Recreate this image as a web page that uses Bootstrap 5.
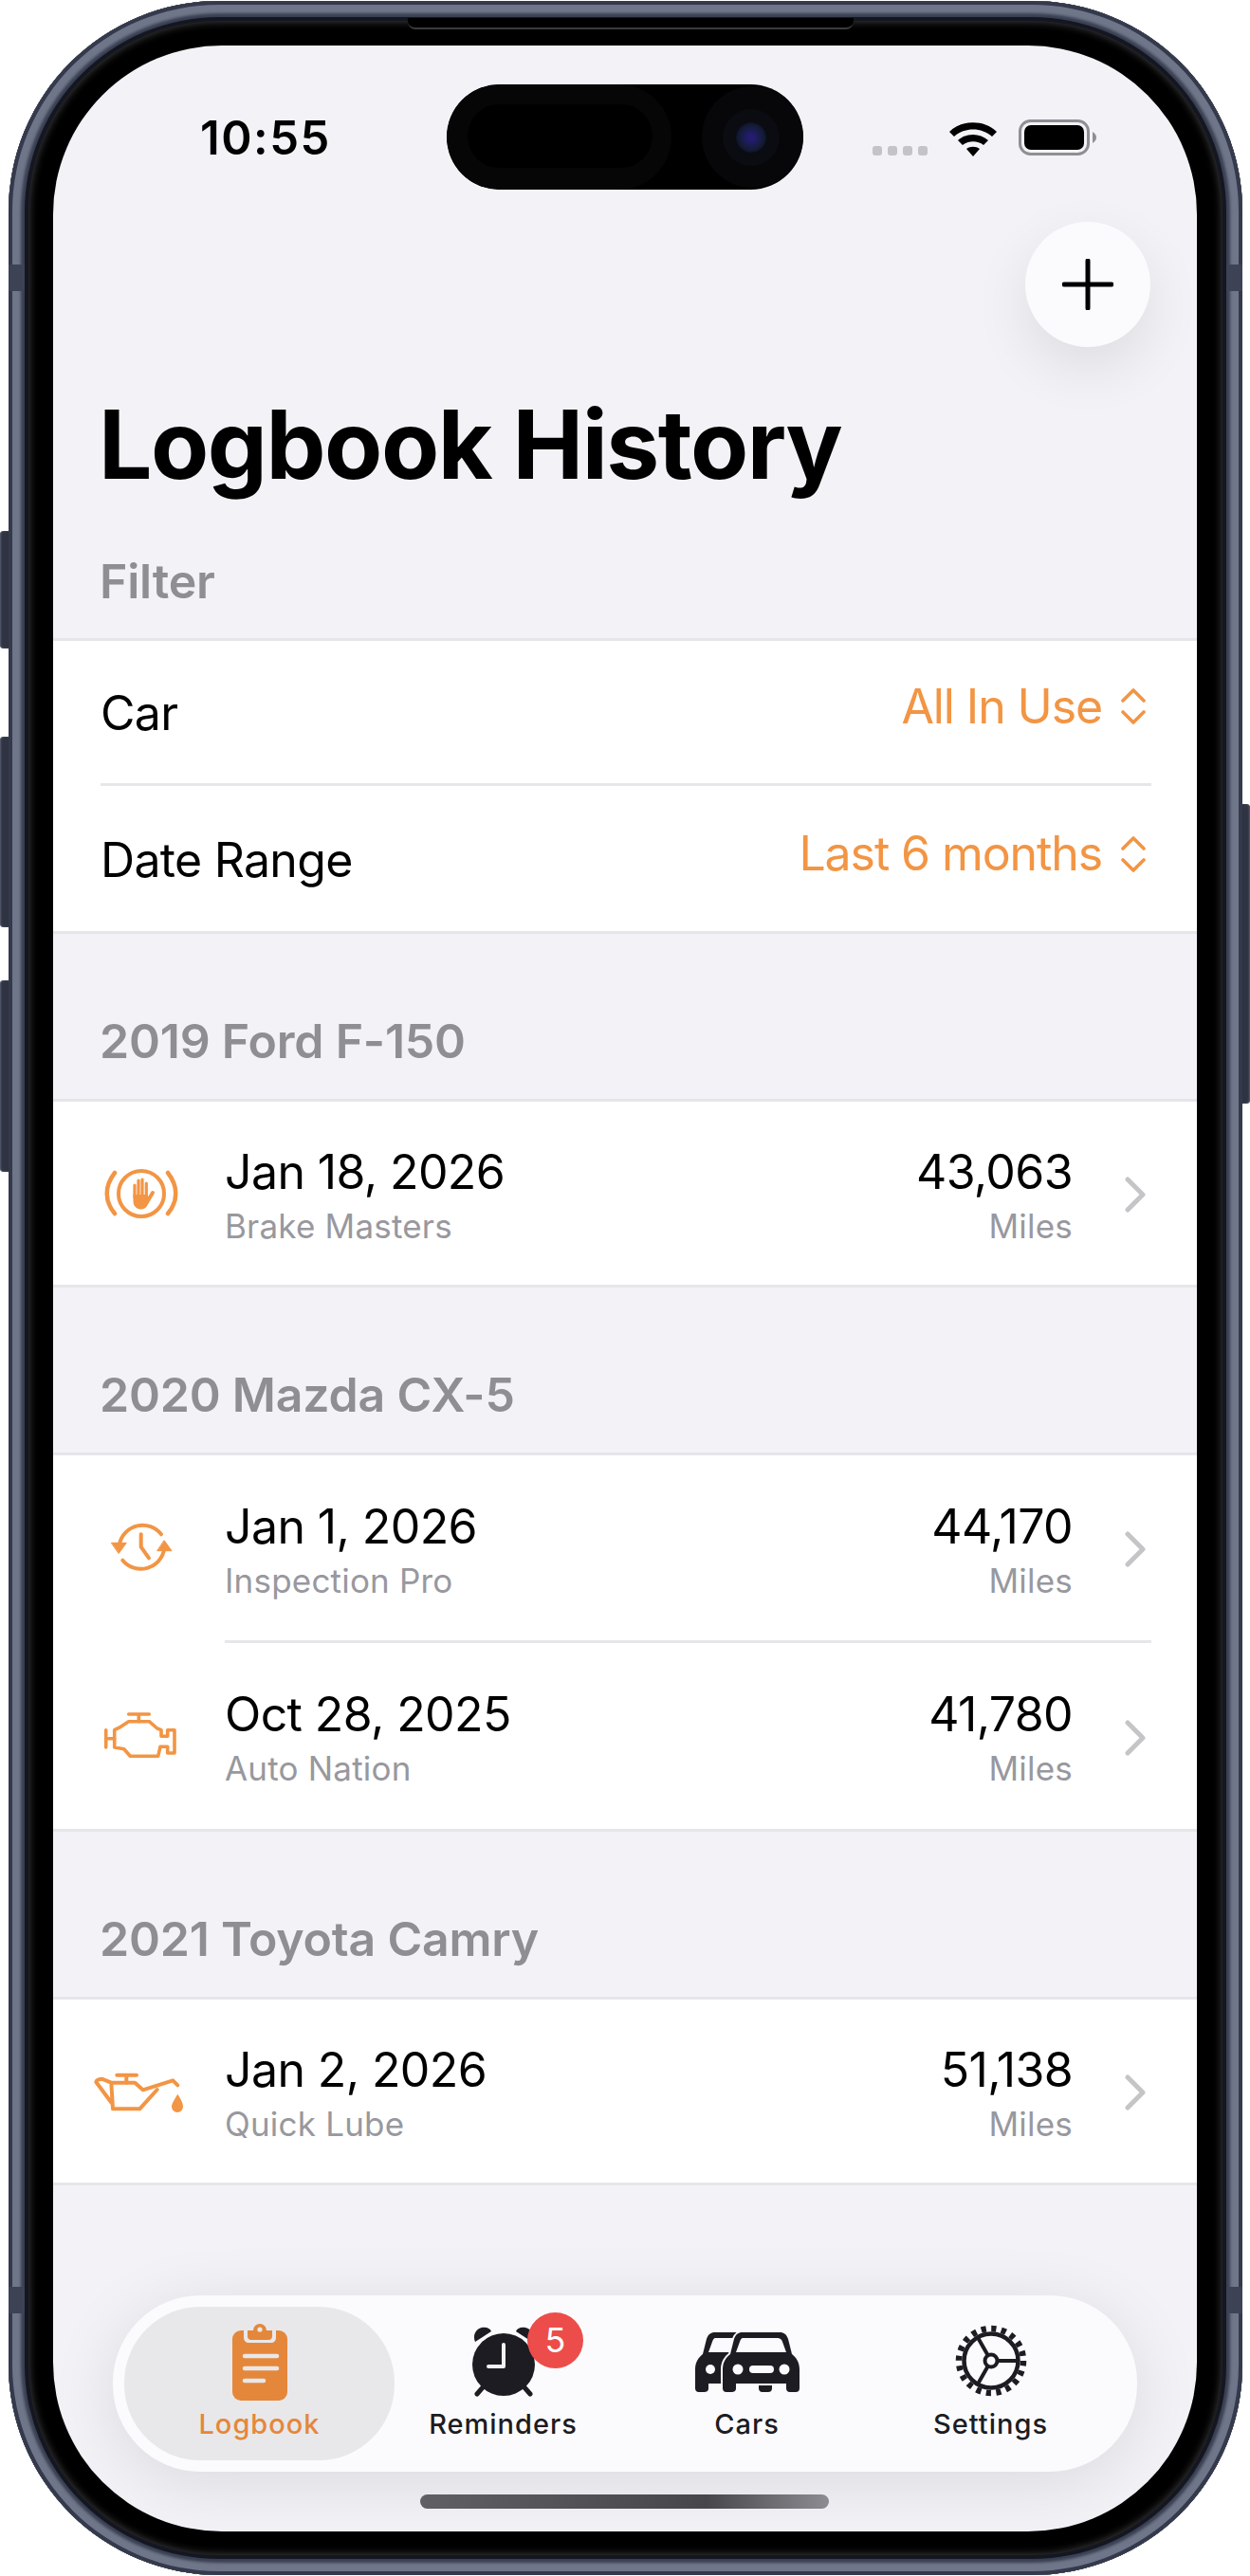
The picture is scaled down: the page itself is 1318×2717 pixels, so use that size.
<!DOCTYPE html>
<html lang="en">
  <head>
    <meta charset="utf-8">
    <title>Logbook History</title>
    <link rel="stylesheet" href="https://cdn.jsdelivr.net/npm/bootstrap@5.3.0/dist/css/bootstrap.min.css">
    <style>
      body {
        background: #fff;
        font-family: Inter, "Noto Sans", sans-serif;
        color: #000;
        overflow: hidden;
      }
      .device { width: 1318px; height: 2717px; padding: 1px 8px 1px 9px; }
      .shell {
        height: 2715px;
        padding: 47px 48px 46px 47px;
        border-radius: 222px;
        background: #000;
        z-index: 1;
        box-shadow: inset 0 0 0 4px #343a4c, inset 0 0 3px 13px #6f7689, inset 0 0 0 17px #3a4052,
          inset 0 0 0 21px #141722, inset 0 0 9px 22px #3d3d3d;
      }
      .side-key { width: 10px; background: #2f3342; border-radius: 4px 0 0 4px; box-shadow: inset 1px 0 2px #5a6072; }
      .key-right { border-radius: 0 4px 4px 0; box-shadow: inset -1px 0 2px #5a6072; }
      .band { width: 17px; height: 28px; background: #3d4254; z-index: 2; }
      .top-lip { top: 18px; left: 421px; width: 470px; height: 12px; background: #000; border-bottom: 2px solid #3a3a3a; border-radius: 0 0 8px 8px; }
      .screen {
        height: 2622px;
        border-radius: 178px;
        overflow: hidden;
        background: #f2f2f7;
      }
      .island { top: 41px; left: 415px; width: 376px; height: 111px; background: #000; border-radius: 56px; z-index: 5; overflow: hidden; }
      .island-left { left: 0; top: 0; width: 237px; height: 111px; border-radius: 56px; background: #060606; }
      .island-core { left: 22px; top: 21px; width: 195px; height: 67px; border-radius: 34px; background: #000; }
      .island-right { right: 0; top: 2px; width: 107px; height: 107px; border-radius: 50%; background: #070709; }
      .lens { right: 39px; top: 40px; width: 32px; height: 32px; border-radius: 50%; background: radial-gradient(circle, #241c70 12%, #141c38 55%, #0a0c14 85%); box-shadow: 0 0 0 14px #0a0c12; }
      .status-row { height: 186px; padding: 80px 106px 0 155px; }
      .clock-time { font-size: 49px; font-weight: 600; line-height: 34px; letter-spacing: 1.5px; margin-top: 1px; }
      .status-icons { gap: 22px; }
      .dots { gap: 6px; margin-top: 26px; }
      .dots i { width: 10px; height: 10px; border-radius: 3px; background: #c4c4c8; }
      .fab-row { padding-right: 49px; }
      .fab-btn { width: 132px; height: 132px; background: #fbfbfe; border: 0; box-shadow: 0 22px 60px rgba(0, 0, 0, .09); }
      .page-title { font-size: 100px; font-weight: 700; line-height: 120px; margin: 43px 0 54px 48px; letter-spacing: -1.5px; }
      .section-head { font-size: 50px; font-weight: 600; color: #8e8e93; line-height: 60px; margin: 83px 0 31px 49px; letter-spacing: -.2px; }
      .section-head.first { margin-top: 0; margin-bottom: 30px; }
      .sheet { border-top: 3px solid #e6e6ea; border-bottom: 3px solid #e6e6ea; border-radius: 0; }
      .sheet .list-group-item { padding: 0; border: 0; color: #000; }
      .sheet .pick-row { padding-left: 50px; padding-right: 48px; }
      .pick-inner { height: 150px; padding-top: 2px; font-size: 50px; letter-spacing: -.7px; }
      .pick-inner.last { height: 156px; padding-top: 4px; border-top: 3px solid #e6e6ea; }
      .pick-value { color: #f29544; margin-top: -14px; padding-right: 6px; gap: 20px; letter-spacing: -1.1px; }
      .entry-icon { width: 181px; padding-left: 5px; }
      .entry-body { height: 193px; padding-top: 3px; padding-right: 53px; }
      .entry-body.tall { height: 195px; }
      .entry-body.split { height: 199px; border-top: 3px solid #e6e6ea; margin-right: 48px; padding-right: 5px; }
      .main-line { font-size: 50px; line-height: 60px; letter-spacing: -.6px; }
      .sub-line { font-size: 35px; line-height: 44px; margin-top: 5px; color: #98989e; letter-spacing: .2px; }
      .chev { margin-left: 54px; }
      .tabbar {
        left: 63px; top: 2373px; width: 1080px; height: 186px;
        padding: 12px 26px;
        grid-template-columns: repeat(4, 257px);
        background: #fbfbfe;
        border-radius: 92px;
        box-shadow: 0 12px 70px rgba(0, 0, 0, .1);
      }
      .tab-link { color: #1c1c22; text-decoration: none; padding-top: 17px; font-size: 29px; font-weight: 500; line-height: 36px; letter-spacing: 1px; }
      .tab-link.on { color: #e5873a; background: #e8e8ea; border-radius: 80px; margin: 0 -14px; }
      .tab-art { height: 82px; margin-bottom: 7px; }
      .count-pill { width: 59px; height: 59px; top: 6px; left: 154px; padding: 0; background: #ec4d4a; color: #fff; font-size: 36px; font-weight: 400; line-height: 59px; border-radius: 50%; letter-spacing: 0; }
      .home-bar { left: 387px; top: 2583px; width: 431px; height: 15px; border-radius: 8px; background: linear-gradient(90deg, #5f5f64, #47474b 70%, #8c8c92); }
    </style>
  </head>
  <body class="m-0">
    <div class="device position-relative">
      <div class="side-key position-absolute" style="left:0;top:560px;height:124px"></div>
      <div class="side-key position-absolute" style="left:0;top:777px;height:201px"></div>
      <div class="side-key position-absolute" style="left:0;top:1034px;height:202px"></div>
      <div class="side-key key-right position-absolute" style="right:0;top:848px;height:316px"></div>

      <div class="shell position-relative">
        <div class="band position-absolute" style="left:0;top:278px"></div>
        <div class="band position-absolute" style="right:0;top:278px"></div>
        <div class="band position-absolute" style="left:0;top:2411px"></div>
        <div class="band position-absolute" style="right:0;top:2411px"></div>
        <div class="top-lip position-absolute"></div>

        <div class="screen position-relative">
          <div class="island position-absolute">
            <div class="island-left position-absolute"><div class="island-core position-absolute"></div></div>
            <div class="island-right position-absolute"></div>
            <div class="lens position-absolute"></div>
          </div>

          <div class="status-row d-flex justify-content-between">
            <div class="clock-time">10:55</div>
            <div class="status-icons d-flex align-items-start">
              <div class="dots d-flex"><i></i><i></i><i></i><i></i></div>
              <svg width="52" height="38" viewBox="0 0 52 38" style="margin-top:-1px">
                <path d="M1 12 C14 -1 38 -1 51 12 L46 17 C35 7 17 7 6 17Z M10 21 C19 13 33 13 42 21 L37 26 C31 21 21 21 15 26Z M19 30 C23 27 29 27 33 30 L26 38Z" fill="#000"/>
              </svg>
              <svg width="82" height="38" viewBox="0 0 82 38" style="margin-top:-2px">
                <rect x="1.5" y="1.5" width="72" height="35" rx="11" fill="none" stroke="#8e8e93" stroke-width="3"/>
                <rect x="6" y="6" width="63" height="26" rx="7" fill="#000"/>
                <path d="M78 13 C81 15 82 17 82 19 C82 21 81 23 78 25Z" fill="#8e8e93"/>
              </svg>
            </div>
          </div>

          <div class="fab-row d-flex justify-content-end">
            <button class="fab-btn btn rounded-circle p-0 d-flex align-items-center justify-content-center" type="button" aria-label="Add">
              <svg width="54" height="54" viewBox="0 0 54 54"><path d="M27 2 V52 M2 27 H52" stroke="#000" stroke-width="5" stroke-linecap="round"/></svg>
            </button>
          </div>

          <h1 class="page-title">Logbook History</h1>

          <div class="section-head first">Filter</div>
          <div class="sheet list-group list-group-flush">
            <div class="list-group-item pick-row">
              <div class="pick-inner d-flex align-items-center justify-content-between">
                <span>Car</span>
                <span class="pick-value d-flex align-items-center">All In Use
                  <svg width="26" height="38" viewBox="0 0 26 38"><path d="M2 13 L13 2 L24 13 M2 25 L13 36 L24 25" fill="none" stroke="#f29544" stroke-width="3.6" stroke-linecap="round" stroke-linejoin="round"/></svg>
                </span>
              </div>
              <div class="pick-inner last d-flex align-items-center justify-content-between">
                <span>Date Range</span>
                <span class="pick-value d-flex align-items-center">Last 6 months
                  <svg width="26" height="38" viewBox="0 0 26 38"><path d="M2 13 L13 2 L24 13 M2 25 L13 36 L24 25" fill="none" stroke="#f29544" stroke-width="3.6" stroke-linecap="round" stroke-linejoin="round"/></svg>
                </span>
              </div>
            </div>
          </div>

          <div class="section-head">2019 Ford F-150</div>
          <div class="sheet list-group list-group-flush">
            <div class="list-group-item d-flex">
              <div class="entry-icon d-flex align-items-center justify-content-center">
                <svg width="80" height="56" viewBox="0 0 80 56" fill="none" stroke="#f29544" stroke-linecap="round">
                  <circle cx="40" cy="28" r="24" stroke-width="4"/>
                  <path d="M12 6 C1 20 1 36 12 49 M68 6 C79 20 79 36 68 49" stroke-width="4.5"/>
                  <path d="M33 19 V32 M37 14 V32 M41 13 V32 M45.3 17 V32" stroke-width="3.2"/>
                  <path d="M31.5 29 V36 C31.5 41 35 44.5 40 44.5 C44 44.5 46 42 47.5 38 L47 29Z" fill="#f29544" stroke="none"/>
                  <path d="M46 37 L52 27" stroke-width="4"/>
                </svg>
              </div>
              <div class="entry-body flex-grow-1 d-flex align-items-center">
                <div class="flex-grow-1">
                  <div class="main-line">Jan 18, 2026</div>
                  <div class="sub-line">Brake Masters</div>
                </div>
                <div class="text-end">
                  <div class="main-line">43,063</div>
                  <div class="sub-line">Miles</div>
                </div>
                <svg class="chev" width="24" height="38" viewBox="0 0 24 38"><path d="M4 3 L20 19 L4 35" fill="none" stroke="#c5c5c8" stroke-width="5" stroke-linecap="round" stroke-linejoin="round"/></svg>
              </div>
            </div>
          </div>

          <div class="section-head">2020 Mazda CX-5</div>
          <div class="sheet list-group list-group-flush">
            <div class="list-group-item d-flex">
              <div class="entry-icon d-flex align-items-center justify-content-center">
                <svg width="66" height="66" viewBox="0 0 66 66" fill="none" stroke="#f29544" stroke-width="4" stroke-linecap="round" stroke-linejoin="round">
                  <path d="M54 18.3 A25 25 0 0 0 10 28.3 M13.3 45.7 A25 25 0 0 0 57.3 33.3"/>
                  <path d="M1.7 27.3 H17.3 L9.3 38.3Z M50 35.7 H65 L57.3 25Z" fill="#f29544" stroke-width="1"/>
                  <path d="M32.7 18.3 V31.7 L41 43.3"/>
                </svg>
              </div>
              <div class="entry-body tall flex-grow-1 d-flex align-items-center">
                <div class="flex-grow-1">
                  <div class="main-line">Jan 1, 2026</div>
                  <div class="sub-line">Inspection Pro</div>
                </div>
                <div class="text-end">
                  <div class="main-line">44,170</div>
                  <div class="sub-line">Miles</div>
                </div>
                <svg class="chev" width="24" height="38" viewBox="0 0 24 38"><path d="M4 3 L20 19 L4 35" fill="none" stroke="#c5c5c8" stroke-width="5" stroke-linecap="round" stroke-linejoin="round"/></svg>
              </div>
            </div>
            <div class="list-group-item d-flex">
              <div class="entry-icon d-flex align-items-center justify-content-center">
                <svg width="80" height="54" viewBox="0 0 80 54" fill="none" stroke="#f29544" stroke-width="3.6" stroke-linecap="round" stroke-linejoin="round">
                  <path d="M26.7 5 H48.3 M37.3 5 V12.7 M2.7 21.7 V40 M2.7 30.7 H11.7"/>
                  <path d="M11.7 21.7 L18.3 18.3 L26.7 12.7 H48.3 L56.7 20 L61 21.7 V28.3 H67.7 V21.7 H75 V46 H67.7 V39.3 H60 L57.7 49.3 H28.3 L21.7 41.7 L11.7 40Z"/>
                </svg>
              </div>
              <div class="entry-body split flex-grow-1 d-flex align-items-center">
                <div class="flex-grow-1">
                  <div class="main-line">Oct 28, 2025</div>
                  <div class="sub-line">Auto Nation</div>
                </div>
                <div class="text-end">
                  <div class="main-line">41,780</div>
                  <div class="sub-line">Miles</div>
                </div>
                <svg class="chev" width="24" height="38" viewBox="0 0 24 38"><path d="M4 3 L20 19 L4 35" fill="none" stroke="#c5c5c8" stroke-width="5" stroke-linecap="round" stroke-linejoin="round"/></svg>
              </div>
            </div>
          </div>

          <div class="section-head">2021 Toyota Camry</div>
          <div class="sheet list-group list-group-flush">
            <div class="list-group-item d-flex">
              <div class="entry-icon d-flex align-items-center justify-content-center">
                <svg width="110" height="60" viewBox="0 0 110 60" fill="none" stroke="#f29544" stroke-width="4" stroke-linecap="round" stroke-linejoin="round">
                  <path d="M29.3 12.7 H50 M39.3 12.7 V20.7"/>
                  <path d="M23.3 20.7 H48.3 L56.7 28.3 L88.3 18.3 L93.3 23.3 M71.7 28 L53.3 48.3 H25 L23.3 20.7 L13.3 16.7 Q8 17 7.3 20 L23.5 41.7"/>
                  <path d="M93.3 32.7 C98 40 99 43 99 46 A6 6 0 0 1 87 46 C87 43 89 40 93.3 32.7Z" fill="#f29544" stroke="none"/>
                </svg>
              </div>
              <div class="entry-body flex-grow-1 d-flex align-items-center">
                <div class="flex-grow-1">
                  <div class="main-line">Jan 2, 2026</div>
                  <div class="sub-line">Quick Lube</div>
                </div>
                <div class="text-end">
                  <div class="main-line">51,138</div>
                  <div class="sub-line">Miles</div>
                </div>
                <svg class="chev" width="24" height="38" viewBox="0 0 24 38"><path d="M4 3 L20 19 L4 35" fill="none" stroke="#c5c5c8" stroke-width="5" stroke-linecap="round" stroke-linejoin="round"/></svg>
              </div>
            </div>
          </div>

          <nav class="tabbar d-grid position-absolute">
            <a class="tab-link on d-flex flex-column align-items-center" href="#">
              <svg class="tab-art" width="58" height="82" viewBox="0 0 58 82">
                <rect x="0" y="8" width="58" height="74" rx="9" fill="#e5873a"/>
                <path d="M12 8 H46 V15 C46 19 44 21 40 21 H18 C14 21 12 19 12 15Z" fill="#e8e8ea"/>
                <path d="M16 8 H22 A7 7 0 0 1 36 8 H42 V14 C42 16 41 18 38 18 H20 C17 18 16 16 16 14Z" fill="#e5873a"/>
                <circle cx="29" cy="7" r="2.6" fill="#e8e8ea"/>
                <path d="M13 35 H47 M13 48 H47 M13 61 H33" stroke="#e8e8ea" stroke-width="4.5" stroke-linecap="round"/>
              </svg>
              Logbook
            </a>
            <a class="tab-link position-relative d-flex flex-column align-items-center" href="#">
              <svg class="tab-art" width="66" height="82" viewBox="0 0 66 82">
                <path d="M3 20 C0 13 4 6 10 5 C15 4 19 6 20 9 Z M63 20 C66 13 62 6 56 5 C51 4 47 6 46 9 Z" fill="#1c1c22"/>
                <path d="M12 67 L5 75 M54 67 L61 75" stroke="#1c1c22" stroke-width="5" stroke-linecap="round"/>
                <circle cx="33" cy="44" r="33" fill="#1c1c22"/>
                <path d="M33 23 V46 H17" fill="none" stroke="#f2f2f5" stroke-width="4" stroke-linecap="round" stroke-linejoin="round"/>
              </svg>
              <span class="count-pill badge position-absolute">5</span>
              Reminders
            </a>
            <a class="tab-link d-flex flex-column align-items-center" href="#">
              <svg class="tab-art" width="110" height="82" viewBox="0 -9 110 82">
                <g transform="translate(-29 0)">
                  <path d="M50 1 H89 C94 1 96 3 98 8 L102 24 C106 27 110 32 110 40 V60 C110 63 108 64 106 64 H100 C97 64 96 62 96 60 V55 H43 V60 C43 63 41 64 38 64 H33 C30 64 29 62 29 60 V40 C29 32 33 27 37 24 L41 8 C43 3 45 1 50 1Z" fill="#1c1c22"/>
                  <path d="M50 7 H87 C89 7 91 8 92 11 L96 22 H43 L47 11 C48 8 49 7 50 7Z" fill="#fbfbfe"/>
                  <circle cx="45" cy="40" r="5" fill="#fbfbfe"/>
                </g>
                <path d="M50 1 H89 C94 1 96 3 98 8 L102 24 C106 27 110 32 110 40 V60 C110 63 108 64 106 64 H100 C97 64 96 62 96 60 V55 H43 V60 C43 63 41 64 38 64 H33 C30 64 29 62 29 60 V40 C29 32 33 27 37 24 L41 8 C43 3 45 1 50 1Z" fill="#1c1c22" stroke="#fbfbfe" stroke-width="4" paint-order="stroke"/>
                <path d="M50 7 H87 C89 7 91 8 92 11 L96 22 H43 L47 11 C48 8 49 7 50 7Z" fill="#fbfbfe"/>
                <circle cx="45" cy="40" r="5.5" fill="#fbfbfe"/>
                <circle cx="94" cy="40" r="5.5" fill="#fbfbfe"/>
                <rect x="57" y="36" width="26" height="8" rx="4" fill="#fbfbfe"/>
              </svg>
              Cars
            </a>
            <a class="tab-link d-flex flex-column align-items-center" href="#">
              <svg class="tab-art" width="76" height="82" viewBox="0 -3 76 82" fill="none" stroke="#1c1c22">
                <circle cx="38" cy="37" r="34" stroke-width="6.5" stroke-dasharray="5.2 5.48"/>
                <circle cx="38" cy="37" r="28.5" stroke-width="4.5"/>
                <path d="M45 37 H66 M34.5 31 L24 12.5 M34.5 43 L24 61.5" stroke-width="4"/>
                <circle cx="38" cy="37" r="6.5" stroke-width="4"/>
              </svg>
              Settings
            </a>
          </nav>
          <div class="home-bar position-absolute"></div>
        </div>
      </div>
    </div>
    <script src="https://cdn.jsdelivr.net/npm/bootstrap@5.3.0/dist/js/bootstrap.bundle.min.js"></script>
  </body>
</html>
